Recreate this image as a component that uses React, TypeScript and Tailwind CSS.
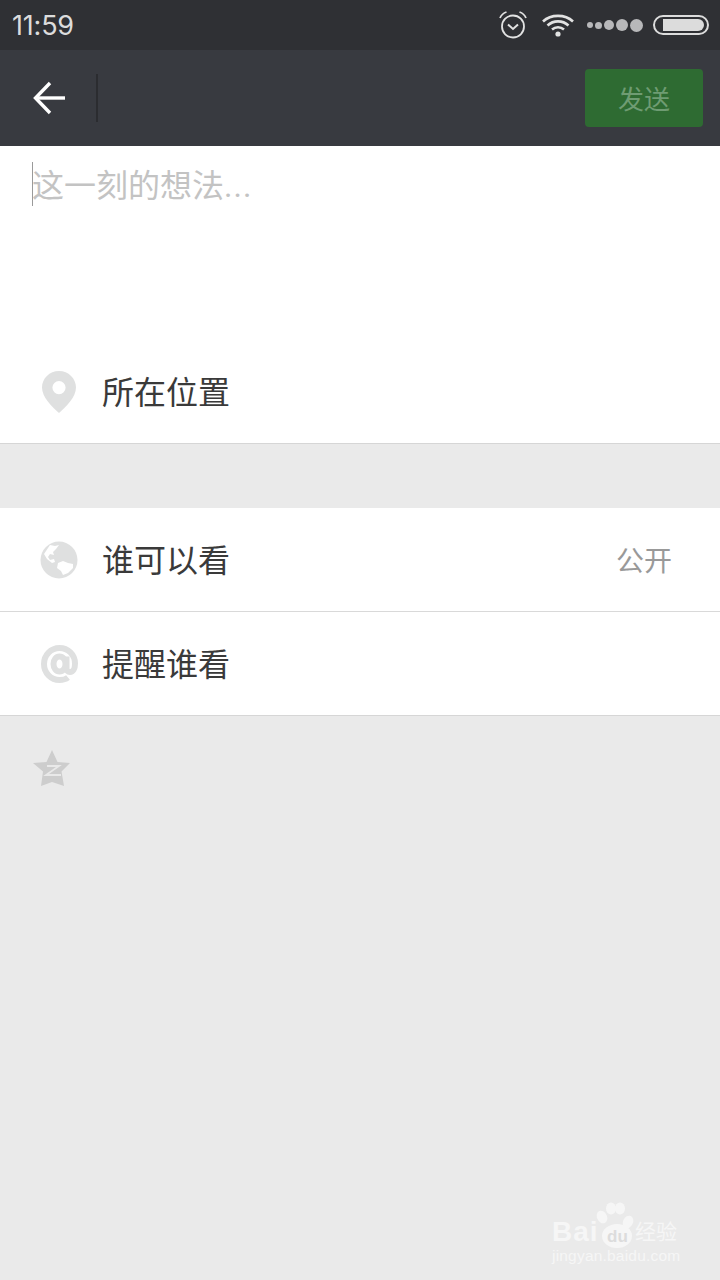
const cjk = "font-['Roboto','Noto_Sans_CJK_SC',sans-serif]";

function BackArrow() {
  return (
    <svg width="36" height="36" viewBox="0 0 36 36" fill="none" stroke="#fff" strokeWidth="3.4">
      <path d="M33 18 H4" />
      <path d="M18 3 L3.5 18 L18 33" />
    </svg>
  );
}

function Alarm() {
  return (
    <svg width="28" height="28" viewBox="0 0 28 28" fill="none" stroke="#e2e2e2" strokeWidth="1.8">
      <circle cx="14" cy="15.5" r="11" />
      <path d="M9 13.5 L14 18 L19 13.5" strokeWidth="2" />
      <path d="M1 7 Q3 2.5 7.5 1" />
      <path d="M27 7 Q25 2.5 20.5 1" />
    </svg>
  );
}

function Wifi() {
  return (
    <svg width="32" height="24" viewBox="0 0 32 24" fill="none" stroke="#e2e2e2" strokeWidth="2.6">
      <path d="M1 8.5 C9 1 23 1 31 8.5" />
      <path d="M5.5 12.5 C11.5 7 20.5 7 26.5 12.5" />
      <path d="M10 16.5 C13.5 13.5 18.5 13.5 22 16.5" />
      <circle cx="16" cy="21" r="2.6" fill="#e2e2e2" stroke="none" />
    </svg>
  );
}

function Signal() {
  return (
    <div className="flex items-center gap-[2px]">
      <div className="w-[6px] h-[6px] rounded-full bg-[#b8b8ba]" />
      <div className="w-[7px] h-[7px] rounded-full bg-[#b8b8ba]" />
      <div className="w-[10px] h-[10px] rounded-full bg-[#b8b8ba]" />
      <div className="w-[12px] h-[12px] rounded-full bg-[#b8b8ba]" />
      <div className="w-[13px] h-[13px] rounded-full bg-[#b8b8ba]" />
    </div>
  );
}

function Battery() {
  return (
    <div className="w-[56px] h-[20px] rounded-full border-2 border-[#dcdcdc] flex items-center justify-end pr-[3px]">
      <div className="w-[41px] h-[12px] bg-[#dcdcdc] rounded-r-full" />
    </div>
  );
}

function PinIcon() {
  return (
    <svg width="36" height="44" viewBox="0 0 36 44">
      <path
        fillRule="evenodd"
        fill="#dfe0e0"
        d="M18 1 C8.5 1 1 8.5 1 17.5 C1 27 11 37 18 43 C25 37 35 27 35 17.5 C35 8.5 27.5 1 18 1 Z M18 11 A6.6 6.6 0 1 1 18 24.2 A6.6 6.6 0 1 1 18 11 Z"
      />
    </svg>
  );
}

function GlobeIcon() {
  return (
    <svg width="40" height="40" viewBox="0 0 40 40">
      <circle cx="20" cy="20" r="18.5" fill="#dfe0e0" />
      <path fill="#fff" d="M11 5 L16 6 L20 5 L17 9 L14 12 L15 15 L11 14 L9 17 L11 20 L15 19 L16 22 L13 23 L8 19 L5 14 Z" />
      <path fill="#fff" d="M19 23 L24 21 L29 23 L34 24 L34 28 L29 33 L24 35 L22 31 L18 28 Z" />
    </svg>
  );
}

function AtIcon() {
  return (
    <svg width="40" height="40" viewBox="0 0 40 40" fill="none" stroke="#dfe0e0" strokeWidth="6">
      <path d="M29 33.5 C26.5 35.5 23.5 36 20.5 36 C12 36 5 29 5 20 C5 11 12 4 20.5 4 C29 4 36 10.5 36 19.5 C36 25 34 28 31 28 C28.8 28 27.5 26.5 27.5 24.5 V12.5" />
      <ellipse cx="20.5" cy="20" rx="6" ry="7.5" />
    </svg>
  );
}

function QzoneIcon() {
  return (
    <svg width="38" height="38" viewBox="0 0 38 38">
      <path fill="#cdcdcd" d="M19 1 L24.5 13 L37 14 L28.5 22.5 L31 37 L19 33 L8 37 L10 22.5 L0 14 L13.5 13 Z" />
      <path fill="none" stroke="#e9e9e9" strokeWidth="1.8" d="M14 17 H26 L13 26 H28" />
    </svg>
  );
}

function Row({ icon, label, value, className }: { icon: React.ReactNode; label: string; value?: string; className?: string }) {
  return (
    <div className={`flex items-center bg-white ${className ?? ""}`}>
      <div className="w-[102px] pl-[39px] shrink-0 flex items-center">{icon}</div>
      <div className="flex-1 text-[32px] leading-none text-[#3a3a3a] pt-[2px]">{label}</div>
      {value ? <div className="pr-[48px] text-[28px] leading-none text-[#999999] pt-[4px]">{value}</div> : null}
    </div>
  );
}

function Watermark() {
  return (
    <div className="absolute left-[552px] top-[1202px] w-[130px] h-[64px] text-[#f6f6f6]">
      <svg className="absolute left-[44px] top-0" width="48" height="48" viewBox="0 0 48 48" fill="#f6f6f6">
        <ellipse cx="6" cy="15" rx="5" ry="6.5" transform="rotate(-25 6 15)" />
        <ellipse cx="15" cy="6.5" rx="5" ry="6" />
        <ellipse cx="24" cy="6.5" rx="5" ry="6" />
        <ellipse cx="32" cy="20" rx="5" ry="6.5" transform="rotate(25 32 20)" />
        <ellipse cx="21" cy="34" rx="15" ry="12" />
      </svg>
      <div className="absolute left-0 top-[13px] text-[28px] leading-[34px] font-bold font-['Liberation_Sans',sans-serif] tracking-[1px]">Bai</div>
      <div className="absolute left-[55px] top-[24px] text-[17px] leading-[22px] font-bold text-[#dcdcdc] font-['Liberation_Sans',sans-serif]">du</div>
      <div className={`absolute left-[83px] top-[16px] text-[21px] leading-[28px] whitespace-nowrap ${cjk}`}>经验</div>
      <div className="absolute left-0 top-[44px] text-[15.5px] leading-[20px] whitespace-nowrap font-['Liberation_Sans',sans-serif] tracking-[0.2px]">jingyan.baidu.com</div>
    </div>
  );
}

export default function App() {
  return (
    <div className={`relative w-[720px] h-[1280px] overflow-hidden bg-[#eaeaea] flex flex-col ${cjk}`}>
      <div className="h-[50px] bg-[#2f3034] flex items-center pl-[12px] pr-[11px] shrink-0">
        <div className="text-[27px] leading-none text-[#dcdcdc] font-['Inter',sans-serif] tracking-[-0.2px]">11:59</div>
        <div className="ml-auto flex items-center">
          <Alarm />
          <div className="ml-[15px]"><Wifi /></div>
          <div className="ml-[13px]"><Signal /></div>
          <div className="ml-[10px]"><Battery /></div>
        </div>
      </div>

      <div className="h-[96px] bg-[#383a40] flex items-center shrink-0">
        <div className="w-[96px] pl-[32px] flex items-center"><BackArrow /></div>
        <div className="w-[2px] h-[48px] bg-[#2b2c30]" />
        <div className="ml-auto mr-[17px] w-[118px] h-[58px] pt-[3px] rounded-[4px] bg-[#2e6b32] flex items-center justify-center text-[26px] leading-none text-[#6f9c73]">发送</div>
      </div>

      <div className="bg-white h-[194px] pl-[32px] pt-[16px] shrink-0">
        <div className="flex items-start">
          <div className="w-[1px] -mr-[1px] h-[44px] bg-[#9a9a9a]" />
          <div className="text-[32px] leading-[44px] text-[#c3c3c3] pt-[2px]">这一刻的想法<span className="tracking-[1px]">...</span></div>
        </div>
      </div>

      <Row icon={<div className="ml-[2px]"><PinIcon /></div>} label="所在位置" className="h-[104px] border-b border-[#d6d6d6] shrink-0" />

      <div className="h-[64px] shrink-0" />

      <Row icon={<GlobeIcon />} label="谁可以看" value="公开" className="h-[104px] border-b border-[#d9d9d9] shrink-0" />
      <Row icon={<AtIcon />} label="提醒谁看" className="h-[104px] border-b border-[#d6d6d6] shrink-0" />

      <div className="pl-[33px] pt-[33px]"><QzoneIcon /></div>

      <Watermark />
    </div>
  );
}
